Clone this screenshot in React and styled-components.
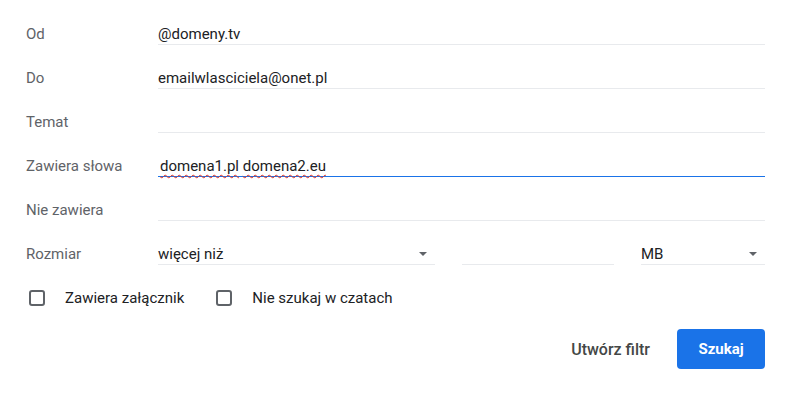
import styled, { createGlobalStyle } from 'styled-components';

const GlobalStyle = createGlobalStyle`
  html, body {
    margin: 0;
    padding: 0;
    background: #ffffff;
  }
  body {
    font-family: Roboto, "Liberation Sans", Arial, sans-serif;
  }
`;

function DropArrow() {
  return <svg width="8" height="4" viewBox="0 0 8 4">
    <path d="M0 0 L8 0 L4 4 Z" fill="#5f6368" />
  </svg>
}

function SearchForm() {
  return <Form>
    <FieldRow>
      <Label>Od</Label>
      <Field>@domeny.tv</Field>
    </FieldRow>
    <FieldRow>
      <Label>Do</Label>
      <Field>emailwlasciciela@onet.pl</Field>
    </FieldRow>
    <FieldRow>
      <Label>Temat</Label>
      <Field />
    </FieldRow>
    <FieldRow>
      <Label>Zawiera słowa</Label>
      <Field $focused>
        <Typed><Misspelled>domena1.pl</Misspelled> <Misspelled>domena2.eu</Misspelled></Typed>
      </Field>
    </FieldRow>
    <FieldRow>
      <Label>Nie zawiera</Label>
      <Field />
    </FieldRow>
    <FieldRow>
      <Label>Rozmiar</Label>
      <SizeGroup>
        <Select $width="277px">
          więcej niż
          <DropArrow />
        </Select>
        <Field />
        <Select $width="124px">
          MB
          <DropArrow />
        </Select>
      </SizeGroup>
    </FieldRow>
    <Checks>
      <CheckItem>
        <Box />
        Zawiera załącznik
      </CheckItem>
      <CheckItem>
        <Box />
        Nie szukaj w czatach
      </CheckItem>
    </Checks>
    <Actions>
      <TextButton>Utwórz filtr</TextButton>
      <PrimaryButton>Szukaj</PrimaryButton>
    </Actions>
  </Form>
}

export default function App() {
  return <>
    <GlobalStyle />
    <SearchForm />
  </>
}

const Form = styled.div`
  box-sizing: border-box;
  width: 789px;
  height: 393px;
  padding: 13px 24px 0 26px;
  background: #ffffff;
`;

const FieldRow = styled.div`
  display: grid;
  grid-template-columns: 132px 1fr;
  align-items: end;
  height: 32px;
  margin-bottom: 12px;
`;

const Label = styled.div`
  font-size: 15px;
  line-height: 18px;
  padding-bottom: 2px;
  color: #5f6368;
`;

const Field = styled.div`
  box-sizing: border-box;
  height: 32px;
  display: flex;
  align-items: flex-end;
  padding-bottom: 1px;
  flex: 1;
  font-size: 15px;
  line-height: 18px;
  color: #202124;
  border-bottom: 1px solid ${p => p.$focused ? '#1a73e8' : '#e8eaed'};
`;

const Typed = styled.span`
  padding-left: 2px;
`;

const Misspelled = styled.span`
  text-decoration: underline wavy #d93025;
  text-decoration-thickness: 1px;
  text-underline-offset: 3px;
`;

const SizeGroup = styled.div`
  display: flex;
  gap: 27px;
`;

const Select = styled.div`
  box-sizing: border-box;
  width: ${p => p.$width};
  flex: none;
  height: 32px;
  display: flex;
  align-items: flex-end;
  justify-content: space-between;
  padding: 0 8px 1px 0;
  font-size: 15px;
  line-height: 18px;
  color: #202124;
  border-bottom: 1px solid #e8eaed;

  svg {
    margin-bottom: 7px;
  }
`;

const Checks = styled.div`
  display: flex;
  align-items: center;
  gap: 32px;
  height: 42px;
  padding-left: 3px;
`;

const CheckItem = styled.label`
  display: flex;
  align-items: center;
  gap: 20px;
  font-size: 15px;
  color: #202124;
`;

const Box = styled.span`
  box-sizing: border-box;
  width: 16px;
  height: 16px;
  border: 2px solid #5f6368;
  border-radius: 3px;
`;

const Actions = styled.div`
  display: flex;
  justify-content: flex-end;
  align-items: center;
  gap: 27px;
  margin-top: 10px;
`;

const TextButton = styled.button`
  border: none;
  background: transparent;
  padding: 0;
  font-family: inherit;
  font-size: 16px;
  font-weight: 500;
  color: #444746;
`;

const PrimaryButton = styled.button`
  width: 88px;
  height: 40px;
  border: none;
  border-radius: 4px;
  background: #1a73e8;
  color: #ffffff;
  font-family: inherit;
  font-size: 15px;
  font-weight: 700;
`;
